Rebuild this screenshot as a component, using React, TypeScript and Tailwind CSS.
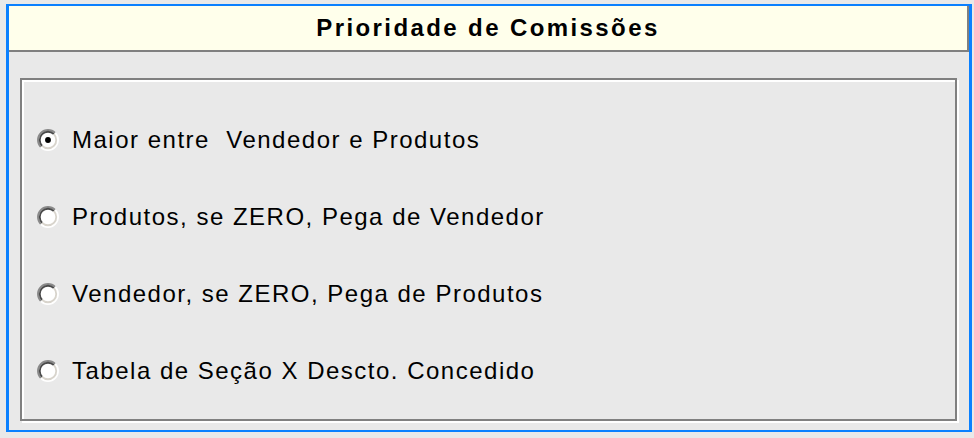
import React from "react";

function Radio({ checked }: { checked?: boolean }) {
  return (
    <svg width="22" height="22" viewBox="0 0 12 12" className="shrink-0">
      <circle cx="6" cy="6" r="5" fill="#ffffff" />
      <path d="M2.111 9.889 A5.5 5.5 0 0 1 9.889 2.111" stroke="#8a8a8a" strokeWidth="1" fill="none" />
      <path d="M9.889 2.111 A5.5 5.5 0 0 1 2.111 9.889" stroke="#ffffff" strokeWidth="1" fill="none" />
      <path d="M2.818 9.182 A4.5 4.5 0 0 1 9.182 2.818" stroke="#4a4a4a" strokeWidth="1" fill="none" />
      <path d="M9.182 2.818 A4.5 4.5 0 0 1 2.818 9.182" stroke="#d8d4cc" strokeWidth="1" fill="none" />
      {checked && <circle cx="6" cy="6" r="1.6" fill="#000000" />}
    </svg>
  );
}

const options = [
  { label: "Maior entre  Vendedor e Produtos", checked: true },
  { label: "Produtos, se ZERO, Pega de Vendedor", checked: false },
  { label: "Vendedor, se ZERO, Pega de Produtos", checked: false },
  { label: "Tabela de Seção X Descto. Concedido", checked: false },
];

export default function App() {
  return (
    <div className="w-[974px] h-[438px] bg-[#e9e9e9] pt-[4px] pl-[6px] overflow-hidden">
      <div className="w-[966px] h-[428px] border-[#0a80ff] border-l-[3px] border-r-[3px] border-t-2 border-b-2 flex flex-col">
        <div className="h-[46px] shrink-0 bg-[#ffffeb] border-b-2 border-r-2 border-[#808080] flex items-center justify-center">
          <span
            className="text-[24px] font-bold tracking-[2.4px] text-black leading-none"
            style={{ fontFamily: '"Liberation Sans", Arial, sans-serif' }}
          >
            Prioridade de Comissões
          </span>
        </div>
        <div className="flex-1 pl-[11px] pt-[26px]">
          <div className="w-[937px] h-[343px] border-2 border-[#808080] shadow-[inset_2px_2px_0_#ffffff,2px_2px_0_#ffffff] pt-[21px] pl-[15px] flex flex-col">
            {options.map((o) => (
              <div key={o.label} className="h-[77px] flex items-center gap-[13px]">
                <Radio checked={o.checked} />
                <span
                  className="text-[24px] tracking-[1.5px] text-black whitespace-pre leading-none"
                  style={{ fontFamily: '"Liberation Sans", Arial, sans-serif' }}
                >
                  {o.label}
                </span>
              </div>
            ))}
          </div>
        </div>
      </div>
    </div>
  );
}
